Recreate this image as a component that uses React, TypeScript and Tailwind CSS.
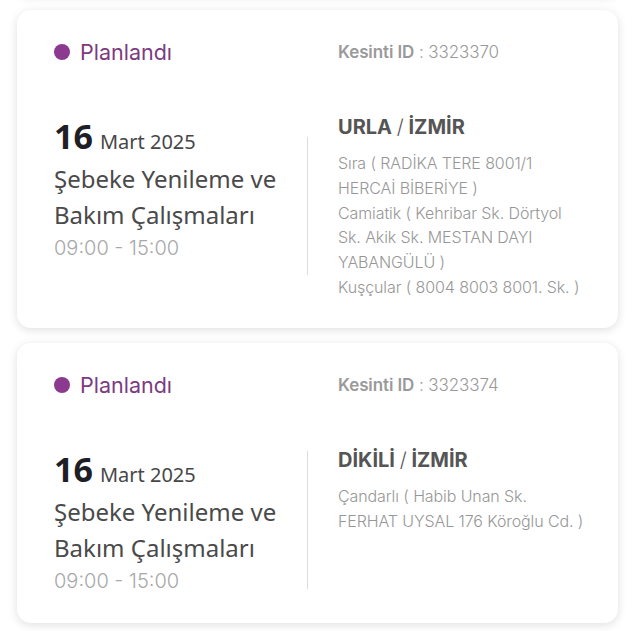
import React from "react";

type Outage = {
  id: string;
  district: string;
  city: string;
  lines: string[];
};

const outages: Outage[] = [
  {
    id: "3323370",
    district: "URLA",
    city: "İZMİR",
    lines: [
      "Sıra ( RADİKA TERE 8001/1",
      "HERCAİ BİBERİYE )",
      "Camiatik ( Kehribar Sk. Dörtyol",
      "Sk. Akik Sk. MESTAN DAYI",
      "YABANGÜLÜ )",
      "Kuşçular ( 8004 8003 8001. Sk. )",
    ],
  },
  {
    id: "3323374",
    district: "DİKİLİ",
    city: "İZMİR",
    lines: ["Çandarlı ( Habib Unan Sk.", "FERHAT UYSAL 176 Köroğlu Cd. )"],
  },
];

const geo = { fontFamily: "Inter, Lato, sans-serif" };
const hum = { fontFamily: "'Noto Sans', 'Open Sans', sans-serif" };

function Card({ o }: { o: Outage }) {
  return (
    <div className="rounded-[14px] bg-white pl-[37px] pr-6 pt-[28px] pb-[28px] shadow-[0_2px_10px_rgba(0,0,0,0.13)]">
      <div className="flex items-center">
        <div className="flex w-[284px] items-center gap-[10px]" style={geo}>
          <span className="h-[16px] w-[16px] rounded-full bg-[#8b3a8f]" />
          <span className="text-[21.5px] leading-[28px] text-[#7d3a81]">Planlandı</span>
        </div>
        <div className="text-[17px] leading-[24px] tracking-[-0.1px] text-[#9a9a9a]" style={geo}>
          <span className="font-semibold">Kesinti ID</span> <span className="font-light">: {o.id}</span>
        </div>
      </div>
      <div className="mt-[47px] flex items-start">
        <div className="w-[253px] pt-[3px]" style={hum}>
          <div className="flex items-baseline gap-[7px]">
            <span className="text-[34px] font-bold leading-[40px] text-[#1e1e26]">16</span>
            <span className="text-[20px] leading-[20px] text-[#474747]">Mart 2025</span>
          </div>
          <div className="mt-[5px] text-[24px] leading-[36px] text-[#4a4a4a]">
            Şebeke Yenileme ve
            <br />
            Bakım Çalışmaları
          </div>
          <div className="mt-[1px] text-[20px] font-light leading-[28px] text-[#a8a8a8]" style={geo}>
            09:00 - 15:00
          </div>
        </div>
        <div className="h-[138px] w-px self-center bg-[#dcdcdc]" />
        <div className="ml-[30px]" style={geo}>
          <div className="text-[20px] font-bold leading-[28px] text-[#555555]">
            {o.district} <span className="font-light">/</span> {o.city}
          </div>
          <div className="mt-[10px] whitespace-nowrap text-[16px] font-light leading-[24.8px] tracking-[-0.1px] text-[#979797]">
            {o.lines.map((l, i) => (
              <div key={i}>{l}</div>
            ))}
          </div>
        </div>
      </div>
    </div>
  );
}

export default function App() {
  return (
    <div className="h-[631px] w-[637px] overflow-hidden bg-white">
      <div className="flex flex-col gap-[15px] pl-[17px] pr-[19px]">
        <div className="-mt-[25px] h-[20px] rounded-[14px] bg-white shadow-[0_2px_10px_rgba(0,0,0,0.13)]" />
        {outages.map((o) => (
          <Card key={o.id} o={o} />
        ))}
      </div>
    </div>
  );
}
